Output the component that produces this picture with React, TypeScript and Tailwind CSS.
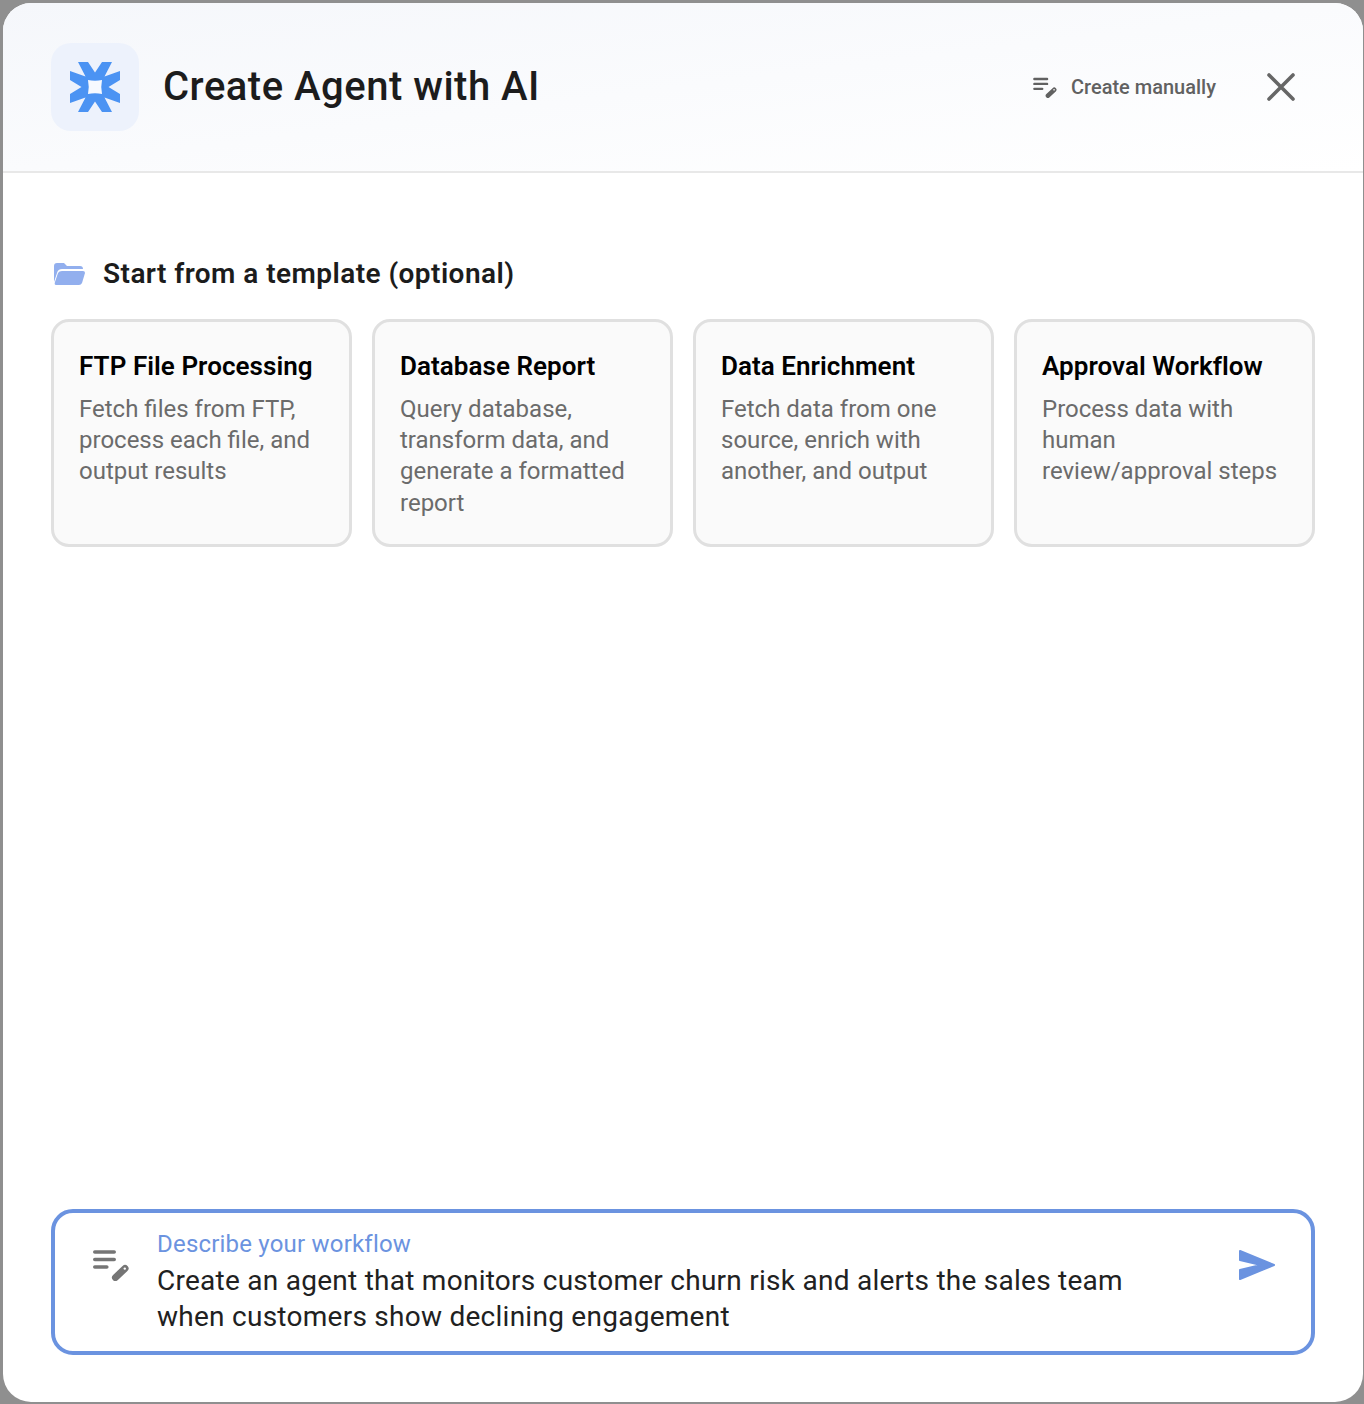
import React from "react";

const cards = [
  { t: "FTP File Processing", d: "Fetch files from FTP, process each file, and output results" },
  { t: "Database Report", d: "Query database, transform data, and generate a formatted report" },
  { t: "Data Enrichment", d: "Fetch data from one source, enrich with another, and output" },
  { t: "Approval Workflow", d: "Process data with human review/approval steps" },
];

function EditLines({ className }: { className?: string }) {
  return (
    <svg viewBox="0 0 36 32" className={className} fill="none">
      <path d="M1.8 3h19.4M1.8 10.5h19.4M1.8 18h12" stroke="currentColor" strokeWidth="3.6" strokeLinecap="round" />
      <path d="M22.5 28.5L32 19.5" stroke="currentColor" strokeWidth="7" strokeLinecap="round" />
      <circle cx="31.8" cy="19.6" r="1.2" fill="#ffffff" />
    </svg>
  );
}

export default function App() {
  return (
    <div className="h-[1404px] w-[1364px] overflow-hidden bg-[#8f8f8f] pt-[3px] pr-px pb-[2px] pl-[3px] font-['Roboto',sans-serif]">
      <div className="flex h-full flex-col overflow-hidden rounded-[28px] bg-white">
        <header className="flex h-[170px] shrink-0 items-center border-b-2 border-[#e8e8e8] bg-gradient-to-br from-[#f5f7fb] to-white pr-[68px] pl-[48px]">
          <div className="flex h-[88px] w-[88px] items-center justify-center rounded-[20px] bg-[#edf2fc]">
            <svg viewBox="-26 -26 52 52" className="h-[52px] w-[52px]">
              <path d="M-7 -7H7V7H-7Z" fill="#f6f9ff" />
              <path
                fillRule="evenodd"
                fill="#4b93f3"
                d="M-17 -25L-7 -25L0 -14.5L7 -25L17 -25L9.5 -10.5L25 -16L25 -7L13.5 0L25 7L25 16L9.5 10.5L17 25L7 25L0 14.5L-7 25L-17 25L-9.5 10.5L-25 16L-25 7L-13.5 0L-25 -7L-25 -16L-9.5 -10.5Z M-7 -7Q0 -5.5 7 -7Q5.5 0 7 7Q0 5.5 -7 7Q-5.5 0 -7 -7Z"
              />
            </svg>
          </div>
          <h1 className="ml-[24px] text-[40px] leading-none font-medium tracking-[0.5px] text-[#1c1c1c]">Create Agent with AI</h1>
          <div className="ml-auto flex items-center">
            <EditLines className="mt-[1px] h-[21px] w-[24px] text-[#616161]" />
            <span className="ml-[14px] text-[20px] font-medium text-[#616161]">Create manually</span>
            <svg viewBox="0 0 28 28" className="ml-[51px] h-[28px] w-[28px]" fill="none">
              <path d="M2 2L26 26M26 2L2 26" stroke="#666666" strokeWidth="3.6" strokeLinecap="round" />
            </svg>
          </div>
        </header>

        <main className="flex min-h-0 flex-1 flex-col px-[48px]">
          <div className="mt-[83px] flex items-center">
            <svg viewBox="0 0 31 22" className="ml-[3px] h-[22px] w-[31px]">
              <path d="M0 3Q0 0 3 0H10L13 3H26Q29 3 29 6H8Q4 6 3 10L0 19Z" fill="#92afee" />
              <path d="M4 10Q5 8 8 8H29Q31 8 31 10L28 20Q27 22 25 22H2Q0 22 1 19Z" fill="#92afee" />
            </svg>
            <h2 className="ml-[18px] text-[28px] leading-[36px] font-semibold tracking-[0.44px] text-[#1c1c1c]">Start from a template (optional)</h2>
          </div>

          <div className="mt-[27px] grid grid-cols-4 gap-[20px]">
            {cards.map((c) => (
              <div key={c.t} className="h-[228px] rounded-[18px] border-[3px] border-[#e0e0e0] bg-[#fafafa] px-[25px] pt-[26px]">
                <h3 className="text-[26px] leading-[36px] font-semibold tracking-[0.05px] text-black">{c.t}</h3>
                <p className="mt-[10px] text-[24px] leading-[31.2px] font-normal text-[#6b6b6b]">{c.d}</p>
              </div>
            ))}
          </div>

          <div className="mt-auto mb-[47px] flex h-[146px] items-start rounded-[22px] border-[4px] border-[#6b93e0] pt-[16px] pr-[35px] pl-[38px]">
            <EditLines className="mt-[20px] h-[32px] w-[36px] shrink-0 text-[#757575]" />
            <div className="ml-[28px] flex-1">
              <div className="text-[24px] leading-[30px] font-normal tracking-[0.2px] text-[#6b93e0]">Describe your workflow</div>
              <div className="mt-[4px] w-[1000px] text-[28px] leading-[36px] tracking-[0.26px] text-[#212121]">
                Create an agent that monitors customer churn risk and alerts the sales team when customers show declining engagement
              </div>
            </div>
            <svg viewBox="0 0 38 32" className="mt-[20px] h-[32px] w-[38px] shrink-0">
              <path d="M2 2L36 16L2 30V21L23 16L2 11Z" fill="#6b93e0" stroke="#6b93e0" strokeWidth="2" strokeLinejoin="round" />
            </svg>
          </div>
        </main>
      </div>
    </div>
  );
}
